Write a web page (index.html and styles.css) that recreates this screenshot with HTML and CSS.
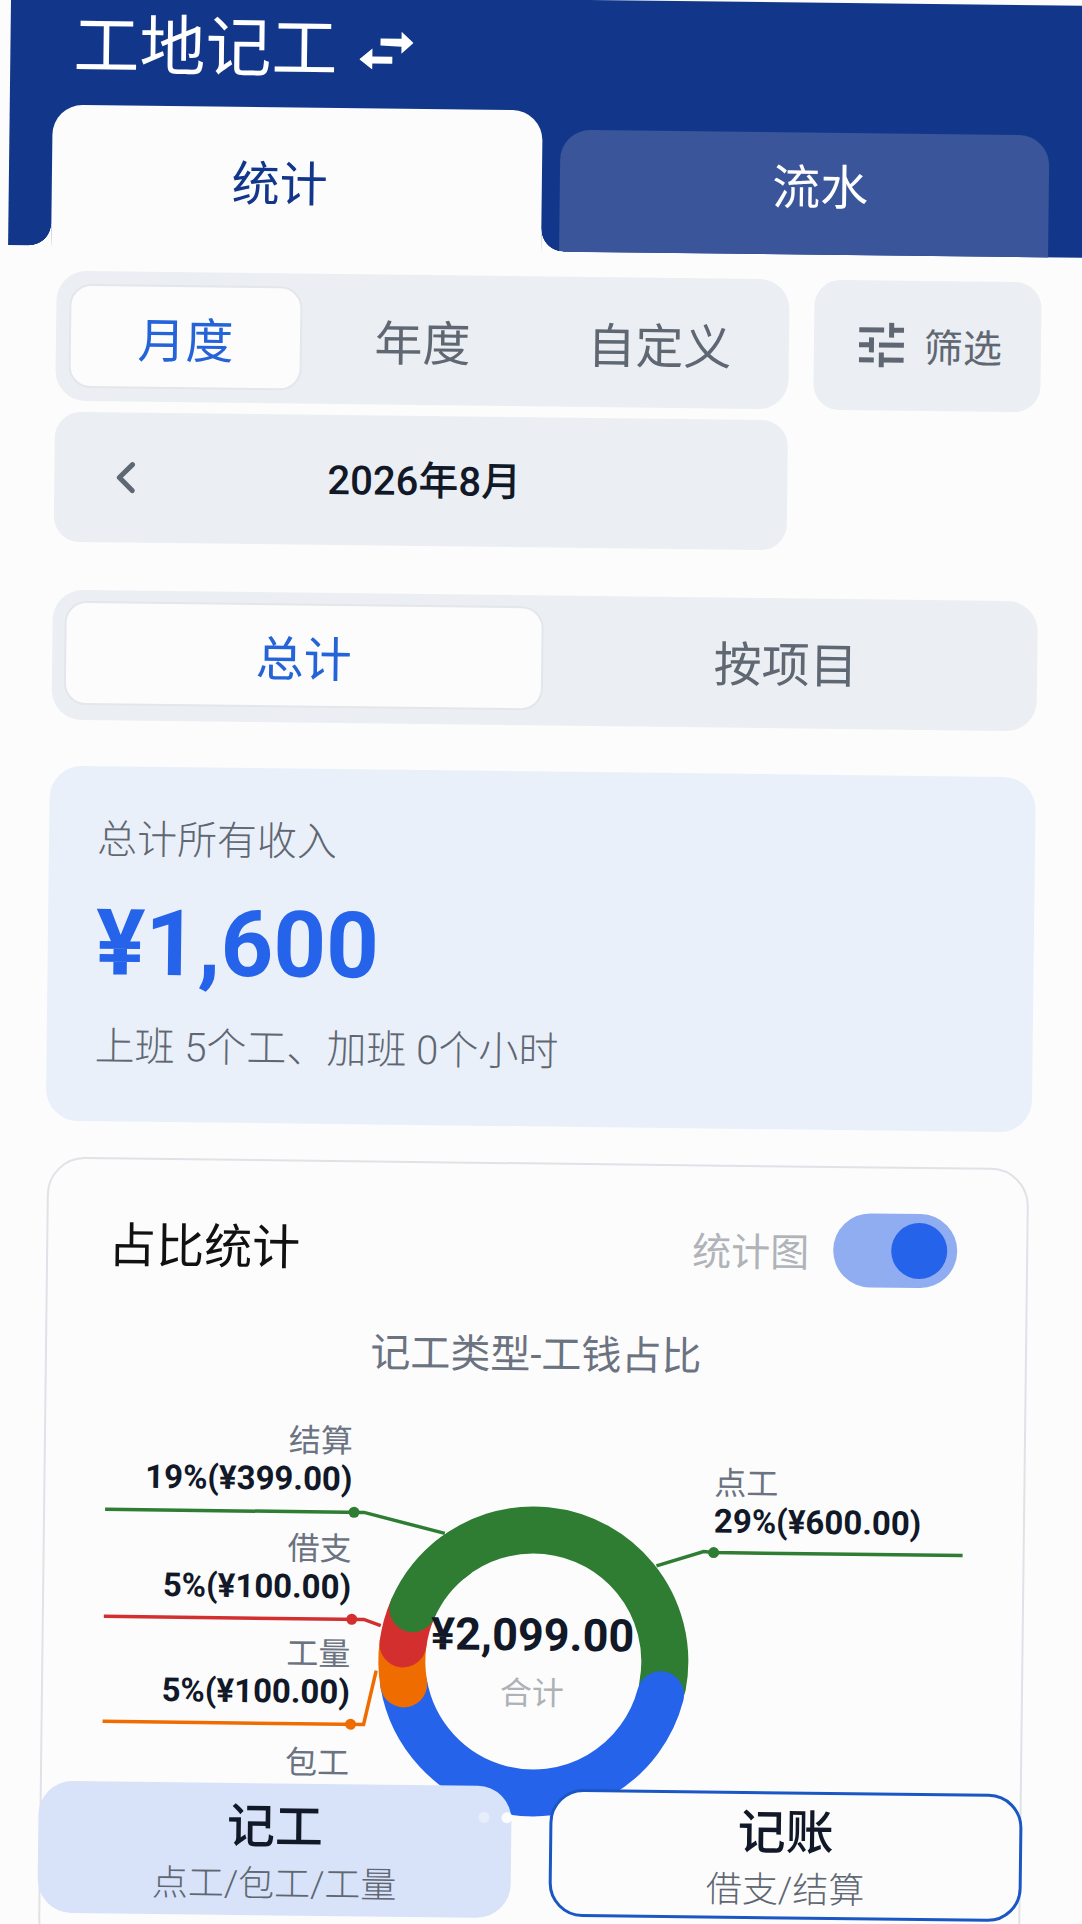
FILE: index.html
```html
<!DOCTYPE html>
<html lang="zh-CN">
<head>
  <meta charset="UTF-8" />
  <meta name="viewport" content="width=device-width, initial-scale=1" />
  <title>工地记工</title>
  <link rel="stylesheet" href="styles.css">
</head>
<body>

<div class="screen">
  <header class="top">
    <div class="brand">
      <h1>工地记工</h1>
      <svg class="swap-icon" viewBox="0 0 54 38" fill="#fff">
        <polygon points="21,7 42,7 42,0 54,11 42,22 42,15 21,14" />
        <polygon points="33,25 13,25 13,17 0,28 13,38 13,32 33,32" />
      </svg>
    </div>
    <div class="main-tabs">
      <div class="main-tab active">统计</div>
      <div class="main-tab">流水</div>
    </div>
  </header>

  <main class="content">
    <div class="filters">
      <div class="segment">
        <div class="seg-item active">月度</div>
        <div class="seg-item">年度</div>
        <div class="seg-item">自定义</div>
      </div>
      <div class="filter-btn">
        <svg class="tune-icon" viewBox="3 3 18 18" fill="#5f6772">
          <path d="M3 17v2h6v-2H3zM3 5v2h10V5H3zm10 16v-2h8v-2h-8v-2h-2v6h2zM7 9v2H3v2h4v2h2V9H7zm14 4v-2H11v2h10zm-6-4h2V7h4V5h-4V3h-2v6z" />
        </svg>
        <span>筛选</span>
      </div>
      <div class="date-bar">
        <svg class="chevron" viewBox="0 0 24 32" fill="none" stroke="#5f6772" stroke-width="5" stroke-linecap="round" stroke-linejoin="round">
          <polyline points="19,3 6,16 19,29" />
        </svg>
        <span class="date-text">2026年8月</span>
      </div>
    </div>

    <div class="scope">
      <div class="scope-item active">总计</div>
      <div class="scope-item">按项目</div>
    </div>

    <section class="summary">
      <div class="summary-label">总计所有收入</div>
      <div class="summary-value">¥1,600</div>
      <div class="summary-note">上班 5个工、加班 0个小时</div>
    </section>

    <section class="card">
      <div class="card-head">
        <h2>占比统计</h2>
        <div class="card-switch">
          <span>统计图</span>
          <div class="switch"><div class="knob"></div></div>
        </div>
      </div>
      <div class="chart-title">记工类型-工钱占比</div>

      <div class="chart">
        <svg class="chart-svg" viewBox="0 0 980 560" fill="none">
          <g stroke-width="47" stroke-linecap="round">
            <circle cx="490" cy="274" r="131.5" pathLength="360" stroke="#2e7d32" stroke-dasharray="140 999" transform="rotate(230 490 274)" />
            <circle cx="490" cy="274" r="131.5" pathLength="360" stroke="#2563eb" stroke-dasharray="155.5 999" transform="rotate(14 490 274)" />
            <circle cx="490" cy="274" r="131.5" pathLength="360" stroke="#ef6c00" stroke-dasharray="17.5 999" transform="rotate(169.5 490 274)" />
            <circle cx="490" cy="274" r="131.5" pathLength="360" stroke="#d32f2f" stroke-dasharray="16 999" transform="rotate(187 490 274)" />
            <circle cx="490" cy="274" r="131.5" pathLength="360" stroke="#2e7d32" stroke-dasharray="30 999" transform="rotate(203 490 274)" />
          </g>
          <g stroke-width="3.5">
            <polyline stroke="#2e7d32" points="60,127 319,127 400,147" />
            <polyline stroke="#d32f2f" points="60,234 320,234 337,240" />
            <polyline stroke="#ef6c00" points="60,339 321,339 333,285" />
            <polyline stroke="#2e7d32" points="612,177 659,162 669,163 918,163" />
          </g>
          <circle cx="309" cy="127" r="5.5" fill="#2e7d32" />
          <circle cx="308" cy="234" r="5.5" fill="#d32f2f" />
          <circle cx="308" cy="339" r="5.5" fill="#ef6c00" />
          <circle cx="669" cy="163" r="5.5" fill="#2e7d32" />
        </svg>

        <div class="slice-label left l-settle"><div class="slice-name">结算</div><div class="slice-value">19%(¥399.00)</div></div>
        <div class="slice-label left l-loan"><div class="slice-name">借支</div><div class="slice-value">5%(¥100.00)</div></div>
        <div class="slice-label left l-qty"><div class="slice-name">工量</div><div class="slice-value">5%(¥100.00)</div></div>
        <div class="slice-label left l-pack"><div class="slice-name">包工</div></div>
        <div class="slice-label l-point"><div class="slice-name">点工</div><div class="slice-value">29%(¥600.00)</div></div>

        <div class="chart-center">
          <div class="center-value">¥2,099.00</div>
          <div class="center-label">合计</div>
        </div>
      </div>
    </section>
  </main>

  <div class="bottom-bar">
    <div class="action action-work">
      <div class="action-title">记工</div>
      <div class="action-sub">点工/包工/工量</div>
    </div>
    <div class="action action-bill">
      <div class="action-title">记账</div>
      <div class="action-sub">借支/结算</div>
    </div>
    <div class="pager"><i></i><i class="on"></i></div>
  </div>
</div>

</body>
</html>
```

FILE: styles.css
```css
html, body {
  margin: 0;
  padding: 0;
  height: 100%;
  overflow: hidden;
  background: #fcfcfd;
}
body {
  font-family: Roboto, "Noto Sans CJK SC", sans-serif;
  color: #111827;
}
h1, h2 {
  margin: 0;
  font-weight: 400;
}

/* the whole shot sits a little crooked */
.screen {
  position: relative;
  width: 1110px;
  height: 1960px;
  margin: -7px 0 0 11px;
  transform-origin: -11px 7px;
  transform: rotate(0.68deg);
}

.top {
  height: 252px;
  background: #12378a;
  display: flex;
  flex-direction: column;
  justify-content: space-between;
}
.brand {
  display: flex;
  align-items: center;
  gap: 22px;
  height: 90px;
  padding: 8px 0 0 63px;
}
.brand h1 {
  font-size: 66px;
  line-height: 90px;
  color: #fff;
}
.swap-icon {
  width: 54px;
  height: 38px;
}

.main-tabs {
  display: flex;
  align-items: flex-end;
  gap: 18px;
  padding-left: 43px;
}
.main-tab {
  position: relative;
  width: 489px;
  height: 122px;
  box-sizing: border-box;
  padding: 0 0 20px 32px;
  display: flex;
  align-items: center;
  justify-content: center;
  font-size: 48px;
  color: #fff;
  background: #3a5599;
  border-radius: 30px 30px 0 0;
}
.main-tab.active {
  width: 490px;
  height: 142px;
  margin-bottom: -1px;
  padding: 4px 34px 0 0;
  color: #12378a;
  background: #fcfcfd;
  z-index: 1;
}
.main-tab.active::before,
.main-tab.active::after {
  content: "";
  position: absolute;
  bottom: 0;
  width: 22px;
  height: 23px;
}
.main-tab.active::before {
  left: -22px;
  background: radial-gradient(circle at 0 0, transparent 21.5px, #fcfcfd 22px);
}
.main-tab.active::after {
  right: -22px;
  background: radial-gradient(circle at 100% 0, transparent 21.5px, #fcfcfd 22px);
}

.content {
  padding: 25px 0 0 49px;
  width: 985px;
}

.filters {
  display: grid;
  grid-template-columns: 733px 227px;
  column-gap: 25px;
  row-gap: 11px;
}
.segment {
  display: flex;
  gap: 4px;
  height: 130px;
  box-sizing: border-box;
  padding: 13px;
  background: #ebeef2;
  border-radius: 30px;
}
.seg-item {
  width: 233px;
  display: flex;
  align-items: center;
  justify-content: center;
  font-size: 48px;
  color: #5f6772;
}
.seg-item.active {
  color: #2563d8;
  background: #fcfcfd;
  border: 2px solid #e3e6ea;
  box-sizing: border-box;
  border-radius: 22px;
}
.filter-btn {
  display: flex;
  align-items: center;
  gap: 20px;
  height: 130px;
  padding: 0 0 2px 45px;
  box-sizing: border-box;
  background: #ebeef2;
  border-radius: 26px;
  font-size: 39px;
  color: #5f6772;
}
.tune-icon {
  width: 45px;
  height: 45px;
}
.date-bar {
  display: flex;
  align-items: center;
  height: 130px;
  box-sizing: border-box;
  padding-left: 59px;
  background: #ebeef2;
  border-radius: 26px;
}
.chevron {
  width: 24px;
  height: 32px;
}
.date-text {
  flex: 1;
  padding: 0 76px 7px 0;
  text-align: center;
  font-size: 40px;
  font-weight: 500;
  color: #111827;
}

.scope {
  display: flex;
  gap: 5px;
  height: 130px;
  box-sizing: border-box;
  margin-top: 48px;
  padding: 11px 14px 15px 12px;
  background: #ebeef2;
  border-radius: 30px;
}
.scope-item {
  flex: 1;
  display: flex;
  align-items: center;
  justify-content: center;
  font-size: 48px;
  color: #5f6772;
}
.scope-item.active {
  color: #2563d8;
  background: #fcfcfd;
  border: 2px solid #e3e6ea;
  border-radius: 22px;
}

.summary {
  height: 355px;
  box-sizing: border-box;
  margin: 46px 0 0 -1px;
  padding: 46px 48px 0;
  background: #eaf0fa;
  border-radius: 32px;
}
.summary-label {
  font-size: 40px;
  line-height: 56px;
  font-weight: 300;
  color: #5f6772;
}
.summary-value {
  margin-top: 25px;
  font-size: 92px;
  line-height: 100px;
  font-weight: 700;
  color: #2563eb;
}
.summary-note {
  margin-top: 26px;
  font-size: 40px;
  line-height: 56px;
  font-weight: 300;
  color: #5f6772;
}

.card {
  width: 982px;
  height: 800px;
  box-sizing: border-box;
  margin: 36px 0 0 1px;
  padding-top: 45px;
  border: 2px solid #dfe2e6;
  border-radius: 38px;
}
.card-head {
  display: flex;
  align-items: center;
  justify-content: space-between;
  height: 74px;
  padding: 0 69px 0 60px;
}
.card-head h2 {
  font-size: 48px;
  font-weight: 400;
  color: #111;
}
.card-switch {
  display: flex;
  align-items: center;
  gap: 24px;
  font-size: 39px;
  color: #b0b3b8;
}
.switch {
  width: 124px;
  height: 74px;
  box-sizing: border-box;
  padding: 9px 10px;
  display: flex;
  justify-content: flex-end;
  background: #8fadf0;
  border-radius: 37px;
}
.knob {
  width: 56px;
  height: 56px;
  background: #2563eb;
  border-radius: 50%;
}

.chart-title {
  margin-top: 47px;
  text-align: center;
  font-size: 40px;
  line-height: 50px;
  font-weight: 400;
  color: #6b7280;
}

.chart {
  position: relative;
  height: 560px;
  margin-top: 7px;
}
.chart-svg {
  position: absolute;
  left: 0;
  top: 0;
  width: 980px;
  height: 560px;
}
.slice-label {
  position: absolute;
  white-space: nowrap;
}
.slice-label.left {
  right: 671px;
  text-align: right;
}
.slice-name {
  font-size: 32px;
  line-height: 37px;
  color: #6b7280;
}
.slice-value {
  font-size: 33px;
  line-height: 37px;
  font-weight: 700;
  color: #111827;
}
.l-settle { top: 38px; }
.l-loan { top: 146px; }
.l-qty { top: 251px; }
.l-pack { top: 360px; }
.l-point {
  left: 669px;
  top: 76px;
}
.chart-center {
  position: absolute;
  left: 290px;
  top: 220px;
  width: 398px;
  text-align: center;
}
.center-value {
  font-size: 45px;
  line-height: 56px;
  font-weight: 700;
  color: #111827;
}
.center-label {
  margin-top: 2px;
  font-size: 32px;
  line-height: 56px;
  color: #aeb1b6;
}

.bottom-bar {
  position: absolute;
  left: 49px;
  top: 1787px;
  display: flex;
  align-items: flex-start;
  gap: 38px;
}
.action {
  width: 473px;
  height: 132px;
  box-sizing: border-box;
  border-radius: 34px;
  text-align: center;
}
.action-work {
  padding-top: 16px;
  background: #d8e3f9;
}
.action-bill {
  height: 128px;
  margin-top: 2px;
  padding-top: 11px;
  background: #fcfcfd;
  border: 3px solid #1a56c4;
}
.action-title {
  font-size: 48px;
  line-height: 56px;
  font-weight: 500;
  color: #111827;
}
.action-sub {
  margin-top: 6px;
  font-size: 36px;
  line-height: 46px;
  font-weight: 300;
  color: #5f6772;
}
.pager {
  position: absolute;
  left: 440px;
  top: 26px;
  display: flex;
  gap: 12px;
}
.pager i {
  width: 11px;
  height: 11px;
  border-radius: 50%;
  background: rgba(255, 255, 255, 0.4);
}
.pager i.on {
  background: rgba(255, 255, 255, 0.9);
}
```
